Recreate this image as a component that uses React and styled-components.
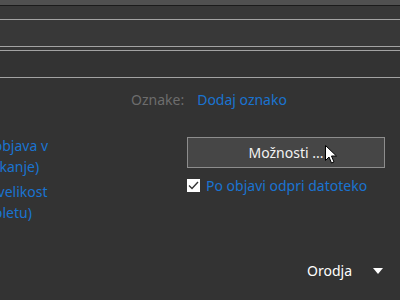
import React from 'react'
import styled, { createGlobalStyle } from 'styled-components'

const GlobalStyle = createGlobalStyle`
  html, body {
    margin: 0;
    padding: 0;
    background: #333333;
    width: 400px;
    height: 300px;
    overflow: hidden;
  }
  body {
    font-family: "Noto Sans", "Open Sans", sans-serif;
    font-size: 14px;
  }
`

const Page = styled.div`
  width: 400px;
  height: 300px;
  display: flex;
  flex-direction: column;
  overflow: hidden;
`

const TopBand = styled.div`
  height: 5px;
  background: #505050;
  border-bottom: 1px solid #1b1b1b;
`

const Field = styled.div`
  height: ${p => p.$h}px;
  background: ${p => p.$bg || '#383838'};
  border-bottom: 1px solid #a3a3a3;
  ${p => p.$top && 'border-top: 1px solid #a3a3a3;'}
`

const Spacer = styled.div`
  height: ${p => p.$h}px;
  background: #363636;
`

const TagsRow = styled.div`
  display: flex;
  align-items: center;
  gap: 13px;
  height: 20px;
  margin-top: 11px;
  padding-left: 131px;
`

const Muted = styled.span`
  color: #6d6d6d;
`

const Link = styled.span`
  color: #1a73d1;
`

const Body = styled.div`
  display: grid;
  grid-template-columns: 187px 198px;
  margin-top: 26px;
`

const Options = styled.div`
  display: flex;
  flex-direction: column;
  gap: 4px;
  white-space: nowrap;
`

const OptionText = styled.div`
  color: #1a73d1;
  line-height: 21px;
`

/* radio labels start left of the visible area; each wrapped line keeps its own end */
const Line = styled.div`
  margin-left: -${p => p.$shift}px;
`

const Right = styled.div`
  display: flex;
  flex-direction: column;
  padding-top: 2px;
`

const Button = styled.div`
  position: relative;
  height: 29px;
  border: 1px solid #8d8d8d;
  background: #464646;
  color: #f2f2f2;
  display: flex;
  align-items: center;
  justify-content: center;
`

const Cursor = styled.svg`
  position: absolute;
  left: 137px;
  top: 7px;
`

const CheckRow = styled.label`
  display: flex;
  align-items: center;
  gap: 6px;
  margin-top: 9px;
  height: 16px;
`

const Box = styled.span`
  width: 13px;
  height: 13px;
  background: #ffffff;
  display: flex;
  align-items: center;
  justify-content: center;
`

const Footer = styled.div`
  margin-top: auto;
  margin-bottom: 20px;
  display: flex;
  align-items: center;
  justify-content: flex-end;
  gap: 21px;
  padding-right: 17px;
  color: #ffffff;
`

function App() {
  return (
    <Page>
      <GlobalStyle />
      <TopBand />
      <Field $h={13} />
      <Field $h={26} />
      <Spacer $h={3} />
      <Field $h={26} $bg="#333333" $top />

      <TagsRow>
        <Muted>Oznake:</Muted>
        <Link>Dodaj oznako</Link>
      </TagsRow>

      <Body>
        <Options>
          <OptionText>
            <Line $shift={91}>Standardno (objava v</Line>
            <Line $shift={76}>spletu in tiskanje)</Line>
          </OptionText>
          <OptionText>
            <Line $shift={76}>Najmanjša velikost</Line>
            <Line $shift={75}>(objava v spletu)</Line>
          </OptionText>
        </Options>
        <Right>
          <Button>
            Možnosti ...
            <Cursor width="13" height="19" viewBox="0 0 13 19">
              <path
                d="M0.5 0.5 L0.5 15.5 L4 12 L6.5 18 L9 17 L6.5 11 L11.5 11 Z"
                fill="#ffffff"
                stroke="#000000"
                strokeWidth="1"
                strokeLinejoin="round"
              />
            </Cursor>
          </Button>
          <CheckRow>
            <Box>
              <svg width="11" height="9" viewBox="0 0 11 9">
                <path d="M1 4.5 L4 7.5 L10 1" fill="none" stroke="#333" strokeWidth="1.4" />
              </svg>
            </Box>
            <Link>Po objavi odpri datoteko</Link>
          </CheckRow>
        </Right>
      </Body>

      <Footer>
        <span>Orodja</span>
        <svg width="10" height="6" viewBox="0 0 10 6">
          <path d="M0 0 L10 0 L5 6 Z" fill="#ffffff" />
        </svg>
      </Footer>
    </Page>
  )
}

export default App
